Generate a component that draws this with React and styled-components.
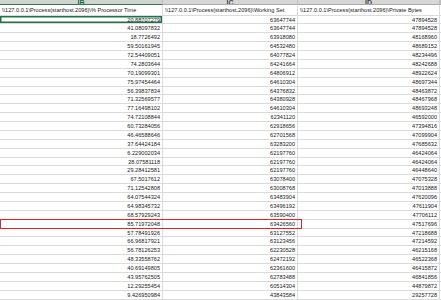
import React from "react";
import styled, { createGlobalStyle } from "styled-components";

const Global = createGlobalStyle`
  html, body { margin: 0; padding: 0; background: #ffffff; overflow: hidden; }
  body { font-family: "Liberation Sans", Arial, sans-serif; }
`;

const COLS = "163px 135px 142px 1fr";

const Sheet = styled.div`
  width: 441px;
  height: 300px;
  overflow: hidden;
  background: #fff;
  display: flex;
  flex-direction: column;
`;

const LetterBar = styled.div`
  display: grid;
  grid-template-columns: ${COLS};
  height: 5px;
  flex: none;
  overflow: hidden;
`;

const Letter = styled.div`
  display: flex;
  align-items: flex-end;
  justify-content: center;
  height: 5px;
  box-sizing: border-box;
  background: ${(p) => (p.$active ? "#cfd4cf" : "#d6d6d6")};
  border-right: 1px solid #bdbdbd;
  border-bottom: 1px solid ${(p) => (p.$active ? "#2f7a4f" : "#a9a9a9")};
  color: ${(p) => (p.$active ? "#1f6b40" : "#444")};
  font-size: 7px;
  line-height: 7px;
  font-weight: 700;
  overflow: hidden;
  & > span { display: block; transform: translateY(2px); }
`;

const Row = styled.div`
  position: relative;
  display: grid;
  grid-template-columns: ${COLS};
  height: ${(p) => (p.$head ? "10.5px" : "8.875px")};
  flex: none;
  &::after {
    content: "";
    display: ${(p) => (p.$marked ? "block" : "none")};
    position: absolute;
    left: 0;
    top: -1px;
    width: 302px;
    height: calc(100% + 1px);
    box-sizing: border-box;
    border: 1.5px solid #e0232f;
    pointer-events: none;
  }
`;

const Cell = styled.div`
  box-sizing: border-box;
  border-right: 1px solid #dadada;
  border-bottom: 1px solid #dadada;
  padding: 0 2px;
  font-size: 5.6px;
  line-height: ${(p) => (p.$head ? "10px" : "8.5px")};
  color: #1a1a1a;
  white-space: nowrap;
  overflow: hidden;
  text-align: ${(p) => (p.$num ? "right" : "left")};
  box-shadow: ${(p) => (p.$selected ? "inset 0 0 0 1.5px #217346" : "none")};
`;

const HEAD = [
  "\\\\127.0.0.1\\Process(starthost.2096)\\% Processor Time",
  "\\\\127.0.0.1\\Process(starthost.2096)\\Working Set",
  "\\\\127.0.0.1\\Process(starthost.2096)\\Private Bytes",
];

const B = [
  "20.88707279", "41.08097832", "18.7726492", "59.50161945", "72.54409051", "74.2803644",
  "70.19099301", "75.97454464", "56.39837834", "71.32569577", "77.16498102", "74.72108844",
  "60.73284056", "46.46588646", "37.64424184", "6.229002034", "28.07581118", "29.28412581",
  "67.5017612", "71.12542808", "64.07544324", "64.98345732", "68.57929243", "85.71972048",
  "57.78491926", "66.96817921", "56.78126253", "48.33558762", "40.69149805", "43.95762505",
  "12.29255454", "9.426950984",
];
const C = [
  "63647744", "63647744", "63918080", "64532480", "64077824", "64241664", "64806912", "64610304",
  "64376832", "64380928", "64610304", "62341120", "62918656", "62701568", "63283200", "62197760",
  "62197760", "62197760", "63078400", "63008768", "63483904", "63496192", "63590400", "63426560",
  "63127552", "63123456", "62230528", "62472192", "62361600", "62783488", "60514304", "43843584",
];
const D = [
  "47894528", "47894528", "48168960", "48689152", "48234496", "48242688", "48922624", "48697344",
  "48463872", "48467968", "48693248", "46592000", "47394816", "47099904", "47685632", "46424064",
  "46424064", "46448640", "47075328", "47013888", "47620096", "47611904", "47706112", "47517696",
  "47218688", "47214592", "46215168", "46522368", "46415872", "46841856", "44879872", "29257728",
];

export default function App() {
  return (
    <Sheet>
      <Global />
      <LetterBar>
        <Letter $active><span>IB</span></Letter>
        <Letter><span>IC</span></Letter>
        <Letter><span>ID</span></Letter>
        <Letter />
      </LetterBar>
      <Row $head>
        {HEAD.map((h) => (
          <Cell $head key={h}>{h}</Cell>
        ))}
        <Cell $head />
      </Row>
      {B.map((b, i) => (
        <Row key={i} $marked={i === 23}>
          <Cell $num $selected={i === 0}>{b}</Cell>
          <Cell $num>{C[i]}</Cell>
          <Cell $num>{D[i]}</Cell>
          <Cell />
        </Row>
      ))}
    </Sheet>
  );
}
